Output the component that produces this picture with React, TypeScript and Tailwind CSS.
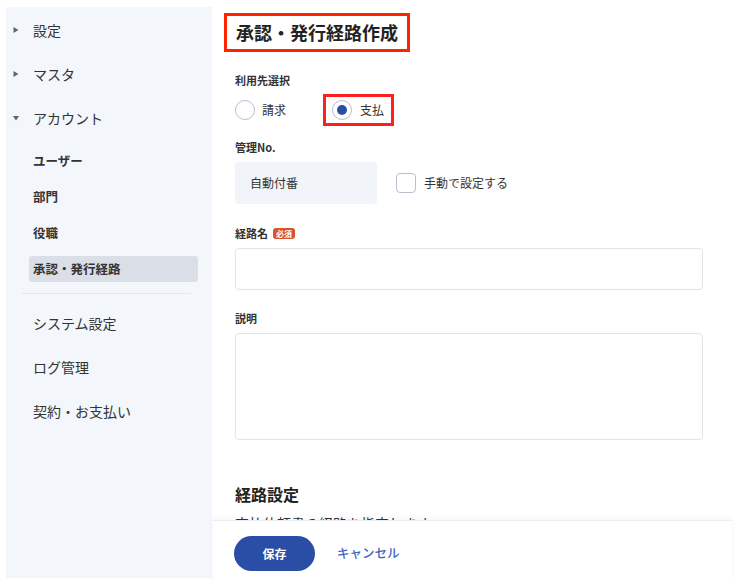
import React from "react";

const font = { fontFamily: '"Noto Sans CJK JP", "Noto Sans", sans-serif' };

function Tri({ down }: { down?: boolean }) {
  return (
    <svg width="6" height="6" viewBox="0 0 6 6" className="shrink-0">
      {down ? <path d="M0 1 L6 1 L3 5.5 Z" fill="#5b6577" /> : <path d="M0.5 0 L5.5 3 L0.5 6 Z" fill="#5b6577" />}
    </svg>
  );
}

function TopItem({ label, tri, down }: { label: string; tri?: boolean; down?: boolean }) {
  return (
    <div className="h-[44px] flex items-center pl-[7px]">
      <div className="w-[20px] flex items-center">{tri ? <Tri down={down} /> : null}</div>
      <span className="text-[14px] text-[#333] leading-none">{label}</span>
    </div>
  );
}

function SubItem({ label, active }: { label: string; active?: boolean }) {
  return (
    <div className="h-[36px] flex items-center pl-[23px]">
      <div className={`h-[26px] w-[169px] rounded-[3px] flex items-center pl-[4px] ${active ? "bg-[#d9dee7]" : ""}`}>
        <span className="text-[12.5px] font-bold text-[#333] leading-none">{label}</span>
      </div>
    </div>
  );
}

function Label({ children }: { children: React.ReactNode }) {
  return <div className="text-[11px] font-bold text-[#333] leading-[16px] flex items-center">{children}</div>;
}

export default function App() {
  return (
    <div className="flex h-[583px] w-[740px] bg-white overflow-hidden" style={font}>
      <aside className="mt-[7px] ml-[6px] w-[206px] h-[571px] bg-[#f3f6fa] flex flex-col pt-[1px] shrink-0">
        <TopItem label="設定" tri />
        <TopItem label="マスタ" tri />
        <TopItem label="アカウント" tri down />
        <div className="mt-[3px]">
          <SubItem label="ユーザー" />
          <SubItem label="部門" />
          <SubItem label="役職" />
          <SubItem label="承認・発行経路" active />
        </div>
        <div className="mt-[6px] ml-[16px] w-[169px] h-px bg-[#e3e7ee]" />
        <div className="mt-[7px]">
          <TopItem label="システム設定" />
          <TopItem label="ログ管理" />
          <TopItem label="契約・お支払い" />
        </div>
      </aside>

      <main className="ml-[1px] w-[519px] h-[583px] flex flex-col shrink-0">
        <div className="flex-1 overflow-hidden px-[22px] pt-[13px]">
          <div className="-ml-[11px] inline-block border-[3px] border-[#ff2400] px-[9px]">
            <h1 className="text-[18px] font-bold text-[#222] leading-[33px]">承認・発行経路作成</h1>
          </div>

          <div className="mt-[20px]">
            <Label>利用先選択</Label>
          </div>
          <div className="mt-[6px] flex items-center">
            <div className="flex items-center">
              <span className="w-[20px] h-[20px] rounded-full border-[1.5px] border-[#b9c0cc] bg-white" />
              <span className="ml-[7px] text-[12px] text-[#333]">請求</span>
            </div>
            <div className="ml-[37px] border-[3px] border-[#ff1f1f] flex items-center pl-[6px] pr-[7px] py-[3px]">
              <span className="w-[20px] h-[20px] rounded-full border-[1.5px] border-[#b9c0cc] bg-white flex items-center justify-center">
                <span className="w-[10px] h-[10px] rounded-full bg-[#2a4ea6]" />
              </span>
              <span className="ml-[8px] text-[12px] text-[#333]">支払</span>
            </div>
          </div>

          <div className="mt-[13px]">
            <Label>管理No.</Label>
          </div>
          <div className="mt-[7px] flex items-center">
            <div className="w-[142px] h-[42px] rounded-[4px] bg-[#f1f4f8] flex items-center pl-[15px]">
              <span className="text-[12px] text-[#333]">自動付番</span>
            </div>
            <span className="ml-[19px] w-[20px] h-[20px] rounded-[4px] border-[1.5px] border-[#b9c0cc] bg-white" />
            <span className="ml-[8px] text-[12px] text-[#333]">手動で設定する</span>
          </div>

          <div className="mt-[21px]">
            <Label>
              経路名
              <span className="ml-[5px] h-[11px] px-[3px] rounded-[3px] bg-[#d9542b] text-white text-[8px] font-bold leading-[11px]">必須</span>
            </Label>
          </div>
          <div className="mt-[7px] w-[468px] h-[42px] rounded-[4px] border border-[#dfe3ea] bg-white" />

          <div className="mt-[20px]">
            <Label>説明</Label>
          </div>
          <div className="mt-[7px] w-[468px] h-[107px] rounded-[4px] border border-[#dfe3ea] bg-white" />

          <h2 className="mt-[42px] text-[16px] font-bold text-[#222] leading-[24px]">経路設定</h2>
          <p className="mt-[7px] text-[14px] text-[#333] leading-[20px]">支払依頼書の経路を指定します。</p>
        </div>

        <footer className="relative z-10 h-[63px] shrink-0 bg-white border-t border-[#eceef2] shadow-[0_-2px_6px_rgba(0,0,0,0.04)] flex items-start pt-[15px] pl-[21px]">
          <button className="w-[81px] h-[35px] rounded-full bg-[#2a4ea6] text-white text-[12px] font-bold">保存</button>
          <button className="ml-[22px] h-[35px] text-[12.5px] text-[#3e63bf] font-medium">キャンセル</button>
        </footer>
      </main>
    </div>
  );
}
